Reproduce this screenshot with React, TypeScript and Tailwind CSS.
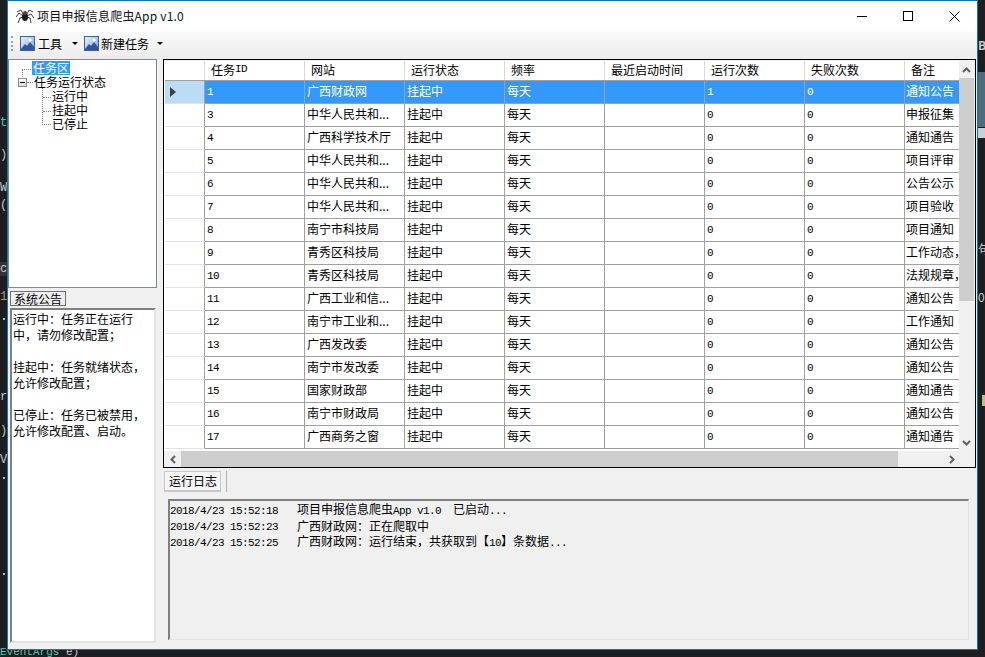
const CJK = "font-['Noto_Sans_CJK_SC','Liberation_Sans',sans-serif]";

const rows = [
  ["1", "广西财政网", "1", "通知公告"],
  ["3", "中华人民共和...", "0", "申报征集"],
  ["4", "广西科学技术厅", "0", "通知通告"],
  ["5", "中华人民共和...", "0", "项目评审"],
  ["6", "中华人民共和...", "0", "公告公示"],
  ["7", "中华人民共和...", "0", "项目验收"],
  ["8", "南宁市科技局", "0", "项目通知"],
  ["9", "青秀区科技局", "0", "工作动态，"],
  ["10", "青秀区科技局", "0", "法规规章，"],
  ["11", "广西工业和信...", "0", "通知公告"],
  ["12", "南宁市工业和...", "0", "工作通知"],
  ["13", "广西发改委", "0", "通知公告"],
  ["14", "南宁市发改委", "0", "通知公告"],
  ["15", "国家财政部", "0", "通知通告"],
  ["16", "南宁市财政局", "0", "通知公告"],
  ["17", "广西商务之窗", "0", "通知通告"],
];

const headers = ["任务ID", "网站", "运行状态", "频率", "最近启动时间", "运行次数", "失败次数", "备注"];

function Spider() {
  return (
    <svg width="18" height="16" viewBox="0 0 18 16" fill="none" stroke="#3a3a3a" strokeWidth="1">
      <path d="M7 6 5 2 1 4M7 8 3 5 0 9M7 9 4 10 2 15M11 6 13 2 17 4M11 8 15 6 18 10M11 9 14 10 15 15" />
      <ellipse cx="9" cy="9" rx="3" ry="4" fill="#1a1a1a" stroke="none" />
      <circle cx="9" cy="5" r="2" fill="#6b3a30" stroke="none" />
    </svg>
  );
}

function PictureIcon() {
  return (
    <svg width="15" height="15" viewBox="0 0 15 15" className="shrink-0">
      <defs>
        <linearGradient id="sky" x1="0" y1="0" x2="1" y2="1">
          <stop offset="0" stopColor="#f2f6fc" />
          <stop offset="1" stopColor="#7d9ad0" />
        </linearGradient>
      </defs>
      <rect x="0.5" y="0.5" width="14" height="14" fill="url(#sky)" stroke="#3b5fa6" />
      <path d="M1 13 5 8l2 2 3-4 4 5v3H1z" fill="#2f55a0" />
      <circle cx="10" cy="4" r="1.5" fill="#fff" />
    </svg>
  );
}

function Caret() {
  return <span className="border-x-[3px] border-t-[3px] border-x-transparent border-t-black" />;
}

function TitleBar() {
  return (
    <div className="flex h-[30px] items-center bg-white pl-2">
      <Spider />
      <span className="ml-[3px] text-[12px] tracking-[0.2px] text-[#111] font-['Noto_Sans_CJK_SC',sans-serif]">
        项目申报信息爬虫App v1.0
      </span>
      <div className="ml-auto flex items-center">
        <div className="flex h-[30px] w-[46px] items-center justify-center">
          <div className="h-px w-[10px] bg-black" />
        </div>
        <div className="flex h-[30px] w-[46px] items-center justify-center">
          <div className="size-[10px] border border-black" />
        </div>
        <div className="flex h-[30px] w-[46px] items-center justify-center">
          <svg width="11" height="11" viewBox="0 0 11 11" stroke="#000" fill="none">
            <path d="M.5.5l10 10M10.5.5l-10 10" />
          </svg>
        </div>
      </div>
    </div>
  );
}

function Toolbar() {
  return (
    <div className={`flex h-[28px] items-center bg-gradient-to-b from-[#fafafa] to-[#ececec] pb-[3px] pl-[3px] text-[12px] text-black ${CJK}`}>
      <div className="h-[15px] w-[2px] border-l-2 border-dotted border-[#a0a0a0]" />
      <div className="ml-[7px] flex items-center">
        <PictureIcon />
        <span className="ml-[3px]">工具</span>
        <span className="ml-[10px] flex"><Caret /></span>
      </div>
      <div className="ml-[6px] flex items-center">
        <PictureIcon />
        <span className="ml-[2px]">新建任务</span>
        <span className="ml-[8px] flex"><Caret /></span>
      </div>
    </div>
  );
}

function TreeView() {
  return (
    <div className="relative h-[229px] border border-[#828790] bg-white text-[12px] leading-[14px] text-black">
      <div className="flex h-[15px] pl-[23px]">
        <span className="mt-px bg-[#3399ff] px-[1px] text-white">任务区</span>
      </div>
      <div className="ml-[9px] flex h-[14px] items-center">
        <span className="flex size-[9px] items-center justify-center border border-[#8a8a8a] bg-gradient-to-b from-white to-[#d8d8d8]">
          <span className="h-px w-[5px] bg-black" />
        </span>
        <span className="w-[6px] border-t border-dotted border-[#808080]" />
        <span className="ml-px">任务运行状态</span>
      </div>
      <div className="ml-[43px]">
        <div className="h-[14px]">运行中</div>
        <div className="h-[14px]">挂起中</div>
        <div className="h-[14px]">已停止</div>
      </div>
      {/* tree connectors sit over the list */}
      <div className="absolute left-[13px] top-[9px] h-[10px] w-[9px] border-t border-l border-dotted border-[#808080]" />
      <div className="absolute left-[33px] top-[28px] h-[37px] w-[9px] border-b border-l border-dotted border-[#808080]" />
      <div className="absolute left-[34px] top-[37px] w-[8px] border-t border-dotted border-[#808080]" />
      <div className="absolute left-[34px] top-[51px] w-[8px] border-t border-dotted border-[#808080]" />
    </div>
  );
}

function NoticePanel() {
  return (
    <div className="flex flex-1 flex-col text-[12px] text-black">
      <div className="mt-[3px] ml-[2px] flex">
        <span className="h-[15px] border border-[#707070] px-[3px] text-[12px] leading-[14px]">系统公告</span>
      </div>
      <div className="mt-[2px] ml-[2px] mr-px flex-1 border-2 border-t-[#808080] border-l-[#808080] border-r-[#e3e3e3] border-b-[#e3e3e3] bg-white pl-[1px] pt-[1px] leading-[16px]">
        <p>运行中：任务正在运行</p>
        <p>中，请勿修改配置；</p>
        <p className="mt-[16px]">挂起中：任务就绪状态，</p>
        <p>允许修改配置；</p>
        <p className="mt-[16px]">已停止：任务已被禁用，</p>
        <p>允许修改配置、启动。</p>
      </div>
    </div>
  );
}

function Num({ children }: { children: string }) {
  return <span className="whitespace-pre font-['Liberation_Mono',monospace] text-[11px] tracking-[-0.6px]">{children}</span>;
}

function Row({ row, selected }: { row: string[]; selected: boolean }) {
  const cell = "flex h-full w-[100px] shrink-0 items-center overflow-hidden whitespace-nowrap border-r border-[#a0a0a0] pl-[2px]";
  return (
    <div className={`flex h-[23px] shrink-0 items-center border-b border-[#a0a0a0] text-[12px] ${selected ? "bg-[#3399ff] text-white" : "bg-white text-black"}`}>
      <div className={`-mb-px flex h-[23px] w-[40px] shrink-0 items-center border-r border-b border-r-[#a0a0a0] border-b-[#e2e2e2] pl-[5px] ${selected ? "bg-[#bbdcf5]" : "bg-white"}`}>
        {selected && <span className="border-y-[5px] border-l-[6px] border-y-transparent border-l-[#404040]" />}
      </div>
      <div className={cell}><Num>{row[0]}</Num></div>
      <div className={`${cell} pb-[2px]`}>{row[1]}</div>
      <div className={`${cell} pb-[2px]`}>挂起中</div>
      <div className={`${cell} pb-[2px]`}>每天</div>
      <div className={cell} />
      <div className={cell}><Num>{row[2]}</Num></div>
      <div className={cell}><Num>0</Num></div>
      <div className="flex h-full w-[55px] shrink-0 items-center overflow-hidden whitespace-nowrap pb-[2px] pl-[1px]">{row[3]}</div>
    </div>
  );
}

function Grid() {
  return (
    <div className="flex h-[409px] flex-col border border-black bg-[#f0f0f0] pt-px">
      <div className="flex min-h-0 flex-1">
        <div className="flex min-h-0 w-[795px] shrink-0 flex-col overflow-hidden bg-white pl-px">
          <div className="flex h-[20px] shrink-0 items-center border-b border-[#a0a0a0] bg-white text-[12px] text-black">
            <div className="h-full w-[40px] shrink-0 border-r border-[#d8d8d8]" />
            {headers.map((h, i) => (
              <div
                key={h}
                className={`flex h-full shrink-0 items-center pb-[2px] pl-[6px] ${i === 7 ? "w-[55px]" : "w-[100px] border-r border-[#d8d8d8]"}`}
              >
                {h === "任务ID" ? (
                  <>任务<Num>ID</Num></>
                ) : (
                  h
                )}
              </div>
            ))}
          </div>
          {rows.map((row, i) => (
            <Row key={row[0]} row={row} selected={i === 0} />
          ))}
        </div>
        <div className="flex w-[15px] shrink-0 flex-col bg-[#f0f0f0]">
          <div className="flex h-[17px] items-center justify-center">
            <svg width="9" height="6" viewBox="0 0 9 6" fill="none" stroke="#606060" strokeWidth="2"><path d="M1 5l3.5-3.5L8 5" /></svg>
          </div>
          <div className="h-[223px] bg-[#cdcdcd]" />
          <div className="mt-auto flex h-[17px] items-center justify-center">
            <svg width="9" height="6" viewBox="0 0 9 6" fill="none" stroke="#606060" strokeWidth="2"><path d="M1 1l3.5 3.5L8 1" /></svg>
          </div>
        </div>
      </div>
      <div className="mr-[15px] flex h-[16px] shrink-0 items-center bg-[#f0f0f0]">
        <div className="flex w-[17px] justify-center">
          <svg width="6" height="9" viewBox="0 0 6 9" fill="none" stroke="#606060" strokeWidth="2"><path d="M5 1 1.5 4.5 5 8" /></svg>
        </div>
        <div className="h-full w-[717px] bg-[#cdcdcd]" />
        <div className="ml-auto flex w-[17px] justify-center">
          <svg width="6" height="9" viewBox="0 0 6 9" fill="none" stroke="#606060" strokeWidth="2"><path d="M1 1l3.5 3.5L1 8" /></svg>
        </div>
      </div>
    </div>
  );
}

function LogLine({ time, children }: { time: string; children: React.ReactNode }) {
  return (
    <div className="flex h-[16px] items-center text-[12px] text-black">
      <span className="w-[127px] shrink-0"><Num>{time}</Num></span>
      <span className="whitespace-nowrap">{children}</span>
    </div>
  );
}

function LogPanel() {
  return (
    <div className="flex flex-1 flex-col">
      <div className="mt-[3px] ml-px flex h-[21px] items-stretch">
        <div className="flex w-[57px] items-center justify-center border border-b-2 border-[#c8c8c8] bg-[#f5f5f5] pl-px text-[12px] text-black">运行日志</div>
        <div className="ml-[4px] w-[2px] border-r border-[#b0b0b0]" />
      </div>
      <div className="mt-[7px] mb-[9px] ml-[5px] mr-[7px] flex-1 border-t-2 border-l-2 border-r border-b border-t-[#808080] border-l-[#808080] border-r-[#e3e3e3] border-b-[#e3e3e3] pt-px">
        <LogLine time="2018/4/23 15:52:18">项目申报信息爬虫<Num>App v1.0  </Num>已启动<Num>...</Num></LogLine>
        <LogLine time="2018/4/23 15:52:23">广西财政网：正在爬取中</LogLine>
        <LogLine time="2018/4/23 15:52:25">广西财政网：运行结束，共获取到【<Num>10</Num>】条数据<Num>...</Num></LogLine>
      </div>
    </div>
  );
}

// bits of the code editor peeking out behind the window
function Backdrop() {
  const left = [
    [116, "#4ec9b0", "t"],
    [148, "#c8c8a0", ")"],
    [181, "#c8c8c8", "W"],
    [198, "#c8c8c8", "("],
    [262, "#c8c8c8", "c"],
    [290, "#d7895f", "1"],
    [390, "#c8c8c8", "r"],
    [424, "#c8c8a0", ")"],
    [453, "#c8c8c8", "V"],
  ] as const;
  return (
    <>
      <div className="absolute left-0 top-[262px] h-[14px] w-[7px] bg-[#333333]" />
      {left.map(([y, color, ch]) => (
        <span
          key={y}
          style={{ top: y, color }}
          className="absolute left-0 w-[7px] overflow-hidden font-['Liberation_Mono',monospace] text-[12px] leading-[14px]"
        >
          {ch}
        </span>
      ))}
      <span className="absolute left-[3px] top-[318px] size-[2px] bg-[#bbb]" />
      <span className="absolute left-[3px] top-[477px] size-[2px] bg-[#bbb]" />
      <span className="absolute left-[3px] top-[573px] size-[2px] bg-[#bbb]" />
      <span className="absolute left-0 top-[645px] font-['Liberation_Mono',monospace] text-[11px] leading-[14px] text-[#4ec9b0]">
        EventArgs <span className="text-[#c8c8c8]">e)</span>
      </span>
      <div className="absolute right-0 top-[72px] h-[55px] w-[7px] bg-[#4d6c7c]" />
      <span className="absolute right-0 top-[38px] w-[7px] overflow-hidden text-[12px] font-bold leading-[14px] text-[#c8c8c8]">B</span>
      <span className="absolute right-0 top-[128px] h-[10px] w-[7px] bg-[#c8d0d8]" />
      <span className="absolute right-0 top-[242px] w-[7px] overflow-hidden text-[12px] leading-[14px] text-[#c8c8c8]">句</span>
      <span className="absolute right-0 top-[290px] w-[7px] overflow-hidden text-[12px] leading-[14px] text-[#c8c8c8]">0</span>
      <span className="absolute right-0 top-[395px] h-[11px] w-[3px] bg-[#c0b890]" />
    </>
  );
}

export default function App() {
  return (
    <div className={`relative h-[657px] w-[985px] overflow-hidden bg-[#1e1e1e] pl-[7px] ${CJK}`}>
      <Backdrop />
      <div className="relative flex h-[650px] w-[971px] flex-col border border-[#0078d7] bg-[#f0f0f0]">
        <TitleBar />
        <Toolbar />
        <div className="flex min-h-0 flex-1">
          <div className="flex w-[149px] shrink-0 flex-col pb-[6px]">
            <TreeView />
            <NoticePanel />
          </div>
          <div className="ml-[6px] flex w-[813px] shrink-0 flex-col">
            <Grid />
            <LogPanel />
          </div>
        </div>
      </div>
    </div>
  );
}
